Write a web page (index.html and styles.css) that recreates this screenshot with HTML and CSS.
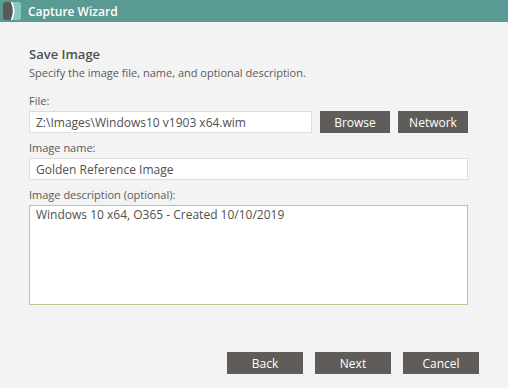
FILE: index.html
```html
<!doctype html>
<html lang="en">
  <head>
    <meta charset="UTF-8" />
    <title>Capture Wizard</title>
    <link rel="stylesheet" href="styles.css">
  </head>
  <body>
    <div class="wizard-header">
      <svg class="logo" width="18" height="18" viewBox="0 0 18 18">
        <rect x="0" y="0" width="18" height="18" rx="2.5" fill="#85c7c1" />
        <path d="M2.5 0 H8 Q12 9 8 18 H2.5 Q0 18 0 15.5 V2.5 Q0 0 2.5 0 Z" fill="#5d5858" />
        <path d="M8.6 0 Q12.8 9 8.6 18" fill="none" stroke="#ffffff" stroke-width="1.6" />
      </svg>
      <span class="wizard-title">Capture Wizard</span>
    </div>

    <div class="content">
      <h2 class="page-title">Save Image</h2>
      <p class="page-subtitle">Specify the image file, name, and optional description.</p>

      <div class="field">
        <label class="field-label">File:</label>
        <div class="file-row">
          <input class="input file-input" type="text" value="Z:\Images\Windows10 v1903 x64.wim" />
          <button class="btn btn-small">Browse</button>
          <button class="btn btn-small">Network</button>
        </div>
      </div>

      <div class="field">
        <label class="field-label">Image name:</label>
        <input class="input" type="text" value="Golden Reference Image" />
      </div>

      <div class="field">
        <label class="field-label">Image description (optional):</label>
        <textarea class="input textarea">Windows 10 x64, O365 - Created 10/10/2019</textarea>
      </div>
    </div>

    <div class="actions">
      <button class="btn btn-nav">Back</button>
      <button class="btn btn-nav">Next</button>
      <button class="btn btn-nav">Cancel</button>
    </div>
  </body>
</html>
```

FILE: styles.css
```css
:root {
  font-family: "Open Sans", "Noto Sans", Arial, sans-serif;
  font-size: 11px;
  color: #555555;
  background-color: #f3f3f3;
}

* {
  box-sizing: border-box;
}

body {
  margin: 0;
  height: 100vh;
  display: flex;
  flex-direction: column;
  overflow: hidden;
}

.wizard-header {
  height: 22px;
  background: #5a9a94;
  display: flex;
  align-items: center;
  gap: 7px;
  padding-left: 3px;
  flex-shrink: 0;
}

.logo {
  display: block;
}

.wizard-title {
  color: #ffffff;
  font-size: 12px;
  font-weight: 600;
}

.content {
  padding: 23px 29px 0 29px;
  flex: 1;
  display: flex;
  flex-direction: column;
}

.page-title {
  margin: 0;
  font-size: 13px;
  font-weight: 600;
  line-height: 19px;
  color: #505050;
}

.page-subtitle {
  margin: 1px 0 0 0;
  line-height: 16px;
  color: #5a5a5a;
}

.field {
  display: flex;
  flex-direction: column;
}

.field:first-of-type {
  margin-top: 12px;
}

.field + .field {
  margin-top: 7px;
}

.field-label {
  line-height: 16px;
  margin-bottom: 2px;
  color: #5a5a5a;
}

.file-row {
  display: flex;
  gap: 8px;
}

.input {
  height: 22px;
  width: 439px;
  border: 1px solid #dddddd;
  background: #ffffff;
  padding: 0 6px;
  font-family: inherit;
  font-size: 12px;
  color: #505050;
  outline: none;
}

.file-input {
  width: 283px;
}

.textarea {
  height: 100px;
  border: 1px solid #b5cb8b;
  padding: 1px 6px;
  resize: none;
  line-height: 16px;
}

.btn {
  height: 22px;
  border: none;
  background: #5f5c5a;
  color: #ffffff;
  font-family: inherit;
  font-size: 12px;
  padding: 0;
  cursor: pointer;
}

.btn-small {
  width: 70px;
}

.btn-nav {
  width: 76px;
}

.actions {
  display: flex;
  justify-content: flex-end;
  gap: 12px;
  padding: 0 29px 14px 0;
  flex-shrink: 0;
}
```
